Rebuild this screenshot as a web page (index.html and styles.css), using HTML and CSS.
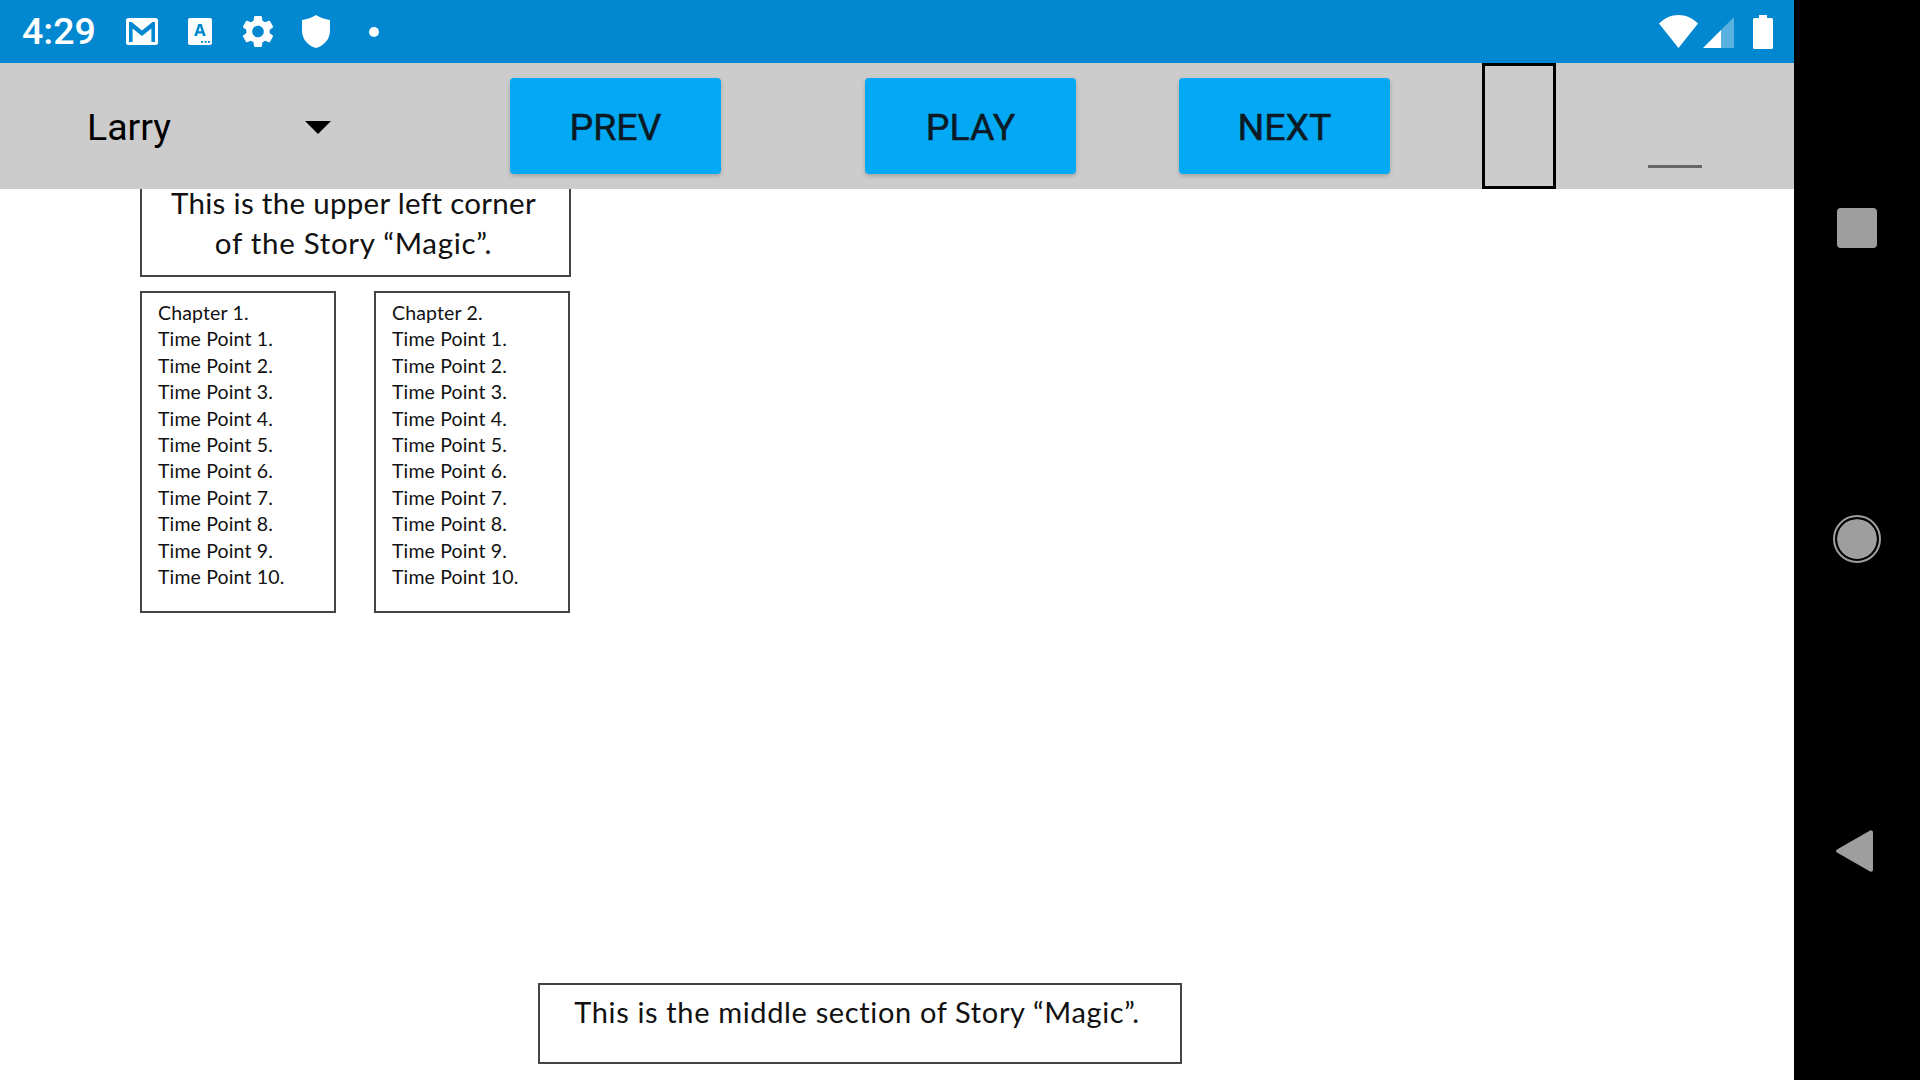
FILE: index.html
```html
<!DOCTYPE html>
<html lang="en">
<head>
<meta charset="utf-8">
<title>Story Magic</title>
<link rel="stylesheet" href="styles.css">
</head>
<body>
<div class="device">
  <div class="screen">
    <header class="status">
      <span class="time">4:29</span>
      <svg class="ic-mail" viewBox="0 0 32 27"><rect width="32" height="27" rx="2.5" fill="#fff"/><path d="M3 4h2.600L16 12.500 26.400 4H29v20h-3.600V10.500L16 18 6.600 10.500V24H3z" fill="#0288d1"/></svg>
      <svg class="ic-translate" viewBox="0 0 24 27"><path d="M2 0h20a2 2 0 0 1 2 2v23a2 2 0 0 1-2 2H2a2 2 0 0 1-2-2V2a2 2 0 0 1 2-2z" fill="#fff"/><path d="M10.300 6h3.400l4.100 12h-2.800l-.8-2.600H9.800L9 18H6.200zm.2 7.200h3l-1.500-4.800z" fill="#0288d1"/><path d="M13 23h2v1.800h-2zM16.500 23h2v1.800h-2zM20 23h2v1.800h-2z" fill="#0288d1"/></svg>
      <svg class="ic-gear" viewBox="2.300 1.800 19.400 20.400"><path fill="#fff" d="M19.140 12.940c.04-.3.060-.61.060-.94 0-.32-.02-.64-.07-.94l2.030-1.580c.18-.14.230-.41.120-.61l-1.920-3.320c-.12-.22-.37-.29-.59-.22l-2.390.96c-.5-.38-1.030-.7-1.620-.94l-.36-2.540c-.04-.24-.24-.41-.48-.41h-3.840c-.24 0-.43.170-.47.410l-.36 2.540c-.59.240-1.130.570-1.620.940l-2.390-.96c-.22-.08-.47 0-.59.220L2.740 8.870c-.12.210-.08.470.12.610l2.030 1.580c-.05.3-.09.630-.09.940s.02.640.07.940l-2.030 1.580c-.18.140-.23.410-.12.610l1.920 3.320c.12.220.37.290.59.220l2.390-.96c.5.380 1.030.7 1.620.94l.36 2.540c.05.240.24.410.48.410h3.840c.24 0 .44-.17.470-.41l.36-2.540c.59-.24 1.130-.56 1.620-.94l2.390.96c.22.080.47 0 .59-.22l1.920-3.320c.12-.22.070-.47-.12-.61l-2.010-1.580zM12 15.600c-1.980 0-3.600-1.620-3.600-3.600s1.620-3.600 3.600-3.600 3.600 1.620 3.600 3.600-1.620 3.600-3.600 3.600z"/></svg>
      <svg class="ic-shield" viewBox="0 0 28 33"><path fill="#fff" d="M14 0C18 2.500 23 4.300 28 5v11c0 7.800-5.600 14.600-14 17C5.600 30.600 0 23.800 0 16V5C5 4.300 10 2.500 14 0z"/></svg>
      <span class="dot"></span>
      <span class="status-gap"></span>
      <svg class="ic-wifi" viewBox="0 0 39 33"><path fill="#fff" d="M19.500 33 0 8.500C5.300 3.300 12 0 19.500 0S33.700 3.300 39 8.500z"/></svg>
      <svg class="ic-signal" viewBox="0 0 31 31"><path fill="#fff" fill-opacity=".35" d="M18 13 31 0v31H18z"/><path fill="#fff" d="M18 13v18H0z"/></svg>
      <svg class="ic-battery" viewBox="0 0 20 34"><path fill="#fff" d="M6 0h8v3h4.500A1.500 1.500 0 0 1 20 4.500v28a1.500 1.500 0 0 1-1.500 1.500h-17A1.500 1.500 0 0 1 0 32.500v-28A1.500 1.500 0 0 1 1.500 3H6z"/></svg>
    </header>
    <div class="toolbar">
      <div class="spinner"><span class="spinner-label">Larry</span><span class="caret"></span></div>
      <button class="btn btn-prev">PREV</button>
      <button class="btn btn-play">PLAY</button>
      <button class="btn btn-next">NEXT</button>
      <div class="frame"></div>
      <div class="underline"></div>
    </div>
    <main class="story">
      <div class="corner">
        <div class="note"><span class="note-first">This is the upper left corner</span><span class="note-second">of the Story “Magic”.</span></div>
        <div class="chapters">
          <div class="chapter">
            <p>Chapter 1.</p><p>Time Point 1.</p><p>Time Point 2.</p><p>Time Point 3.</p><p>Time Point 4.</p><p>Time Point 5.</p><p>Time Point 6.</p><p>Time Point 7.</p><p>Time Point 8.</p><p>Time Point 9.</p><p>Time Point 10.</p>
          </div>
          <div class="chapter">
            <p>Chapter 2.</p><p>Time Point 1.</p><p>Time Point 2.</p><p>Time Point 3.</p><p>Time Point 4.</p><p>Time Point 5.</p><p>Time Point 6.</p><p>Time Point 7.</p><p>Time Point 8.</p><p>Time Point 9.</p><p>Time Point 10.</p>
          </div>
        </div>
      </div>
      <div class="middle">This is the middle section of Story “Magic”.</div>
    </main>
  </div>
  <nav class="navbar">
    <span class="nav-square"></span>
    <span class="nav-circle"></span>
    <svg class="nav-back" viewBox="0 0 37 42"><path fill="#9e9e9e" d="M34.500.3a2 2 0 0 1 2.500 2V39.700a2 2 0 0 1-2.500 2L1 22.500a1.700 1.700 0 0 1 0-3z"/></svg>
  </nav>
</div>
</body>
</html>
```
FILE: styles.css
```css
* { box-sizing: border-box; }
html, body { margin: 0; padding: 0; height: 100%; background: #000; overflow: hidden; }
.device { display: flex; width: 1920px; height: 1080px; }
.screen { width: 1794px; height: 1080px; display: flex; flex-direction: column; background: #fff; overflow: hidden; }

.status { height: 63px; flex: none; display: flex; align-items: center; padding-left: 22px; background: #0288d1; }
.status svg { display: block; flex: none; }
.time { width: 71px; font: 500 37.500px/1 Roboto, sans-serif; color: #fff; white-space: nowrap; }
.ic-mail { width: 32px; height: 27px; margin-left: 33px; }
.ic-translate { width: 24px; height: 27px; margin-left: 30px; }
.ic-gear { width: 32px; height: 33px; margin-left: 30px; }
.ic-shield { width: 28px; height: 33px; margin-left: 28px; }
.dot { width: 10px; height: 10px; margin-left: 39px; border-radius: 50%; background: #fff; }
.status-gap { flex: 1; }
.ic-wifi { width: 39px; height: 33px; }
.ic-signal { width: 31px; height: 31px; margin-left: 5px; margin-top: 2px; }
.ic-battery { width: 20px; height: 34px; margin-left: 19px; margin-right: 21px; }

.toolbar { height: 126px; flex: none; display: flex; align-items: center; padding-left: 87px; background: #ccc; }
.spinner { width: 244px; display: flex; align-items: center; justify-content: space-between; font: 400 37.500px/1 Roboto, sans-serif; color: #000; }
.spinner-label { padding-top: 4px; }
.caret { width: 0; height: 0; border-left: 13px solid transparent; border-right: 13px solid transparent; border-top: 13px solid #000; margin-top: 3px; }
.btn { width: 211px; height: 96px; padding: 3px 0 0; border: 0; border-radius: 4px; background: #03a9f4; color: #0b1a24; font: 400 37.500px/1 Roboto, sans-serif; -webkit-text-stroke: .5px #0b1a24; box-shadow: 0 2px 4px rgba(0,0,0,.2); }
.btn-prev { margin-left: 179px; }
.btn-play { margin-left: 144px; }
.btn-next { margin-left: 103px; }
.frame { width: 74px; height: 126px; margin-left: 92px; border: 3px solid #000; }
.underline { width: 54px; height: 3px; margin-left: 92px; margin-top: 80px; background: #666; }

.story { flex: 1; min-height: 0; display: flex; flex-direction: column; padding-left: 140px; font-family: Lato, "Open Sans", sans-serif; color: #111; }
.corner { width: 431px; }
.note { height: 88px; padding-right: 4px; border: 2px solid #444; border-top: 0; text-align: center; font-size: 29.500px; letter-spacing: .3px; }
.note-first { display: block; line-height: 28px; }
.note-second { display: block; margin-top: 6px; line-height: 40px; letter-spacing: .7px; }
.chapters { display: flex; justify-content: space-between; width: 430px; margin-top: 14px; }
.chapter { width: 196px; height: 322px; padding: 7px 0 0 16px; border: 2px solid #444; font-size: 19.500px; letter-spacing: .15px; line-height: 26.400px; }
.chapter p { margin: 0; }
.middle { width: 644px; height: 81px; margin-top: 370px; margin-left: 398px; padding: 7px 6px 0 0; border: 2px solid #444; text-align: center; font-size: 29px; letter-spacing: .65px; line-height: 40px; }

.navbar { width: 126px; height: 1080px; flex: none; display: flex; flex-direction: column; align-items: center; justify-content: space-between; padding: 208px 0; background: #000; }
.nav-square { width: 40px; height: 40px; border-radius: 4px; background: #9e9e9e; }
.nav-circle { width: 48px; height: 48px; border-radius: 50%; border: 2px solid #9e9e9e; padding: 2px; background: #9e9e9e content-box; box-shadow: inset 0 0 0 2px #000; }
.nav-back { width: 37px; height: 42px; display: block; margin-right: 5px; }
```
